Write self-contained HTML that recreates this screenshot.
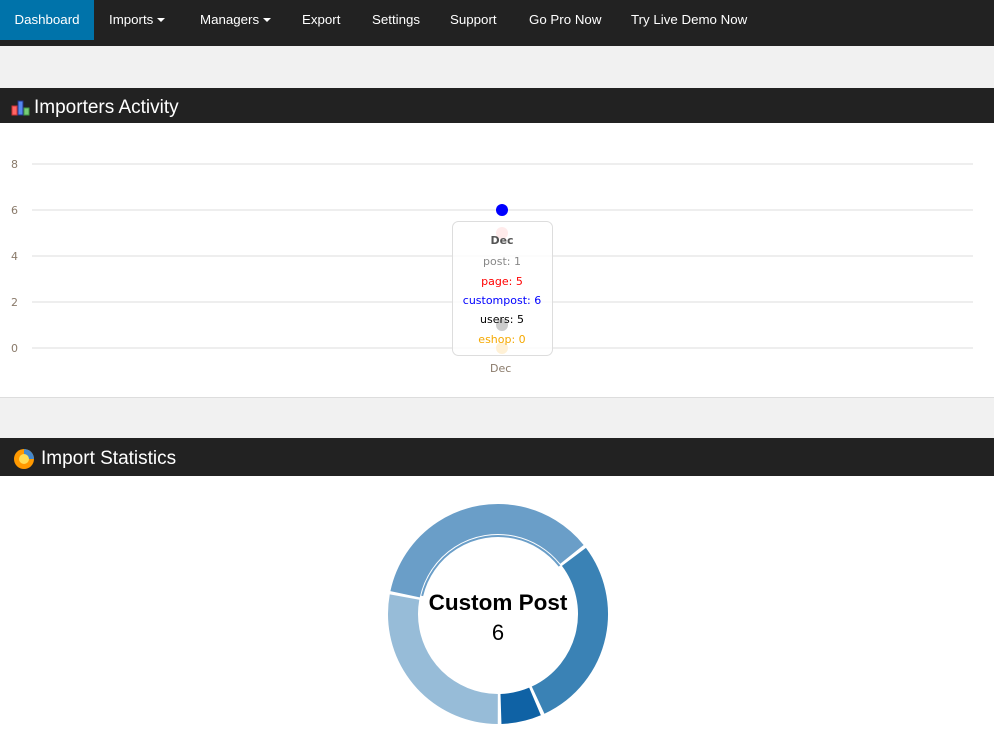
<!DOCTYPE html><html><head><style>
body{margin:0;width:994px;height:745px;overflow:hidden;background:#fff;font-family:"Liberation Sans",sans-serif}
.nav{height:46px;background:#222;position:relative;font-size:13.3px;color:#fff}
.nav div{position:absolute;top:0;line-height:40px;white-space:nowrap}
.nav .a{background:#0073aa;left:0;width:94px;text-align:center;height:40px}
.car{display:inline-block;border-left:4px solid transparent;border-right:4px solid transparent;border-top:4px solid #fff;vertical-align:middle;margin-left:4px}
.gray{background:#f1f1f1}
.hd{background:#222;color:#fff;font-size:19px;display:flex;align-items:center}
</style></head><body>
<div class="nav"><div class="a">Dashboard</div><div style="left:109px">Imports<span class="car"></span></div><div style="left:200px">Managers<span class="car"></span></div><div style="left:302px">Export</div><div style="left:372px">Settings</div><div style="left:450px">Support</div><div style="left:529px">Go Pro Now</div><div style="left:631px">Try Live Demo Now</div></div>
<div class="gray" style="height:42px"></div>
<div class="hd" style="height:35px;padding-top:4px;box-sizing:border-box"><svg width="22" height="20" style="margin-left:11px;margin-right:1px"><rect x="1" y="8" width="5" height="9" fill="#f66" stroke="#c33"/><rect x="7" y="3" width="5" height="14" fill="#58e" stroke="#238"/><rect x="13" y="10" width="5" height="7" fill="#7c7" stroke="#494"/></svg>Importers Activity</div>
<svg width="994" height="274" style="display:block">
<g stroke="#ddd"><line x1="32" x2="973" y1="41" y2="41"/><line x1="32" x2="973" y1="87" y2="87"/><line x1="32" x2="973" y1="133" y2="133"/><line x1="32" x2="973" y1="179" y2="179"/><line x1="32" x2="973" y1="225" y2="225"/></g>
<g font-size="11" fill="#8a7a6a" font-family="DejaVu Sans"><text x="11" y="45">8</text><text x="11" y="91">6</text><text x="11" y="137">4</text><text x="11" y="183">2</text><text x="11" y="229">0</text><text x="490" y="249">Dec</text></g>
<circle cx="502" cy="87" r="6" fill="#00f"/><circle cx="502" cy="110" r="6" fill="#f99"/><circle cx="502" cy="202" r="6" fill="#000"/><circle cx="502" cy="225" r="6" fill="#fb3"/>
<rect x="452.5" y="98.5" width="100" height="134" rx="6" fill="rgba(255,255,255,.8)" stroke="#ddd"/>
<g font-size="11" text-anchor="middle" font-family="DejaVu Sans"><text x="502" y="121" font-weight="bold" fill="#555">Dec</text><text x="502" y="142" fill="#888">post: 1</text><text x="502" y="162" fill="#f00">page: 5</text><text x="502" y="181" fill="#00f">custompost: 6</text><text x="502" y="200" fill="#000">users: 5</text><text x="502" y="220" fill="#f5a800">eshop: 0</text></g>
</svg>
<div class="gray" style="height:40px;border-top:1px solid #ddd"></div>
<div class="hd" style="height:38px;padding-top:4px;box-sizing:border-box"><svg width="24" height="24" style="margin-left:12px;margin-right:5px"><circle cx="12" cy="12" r="10" fill="#f90"/><path d="M12 12 L12 2 A10 10 0 0 1 22 12Z" fill="#48c"/><circle cx="12" cy="12" r="5" fill="#fd5"/></svg>Import Statistics</div>
<svg width="994" height="269" style="display:block;position:absolute;top:476px;left:0">
<g transform="rotate(192 498 138)" fill="none" stroke-width="30">
<circle cx="498" cy="138" r="95" stroke="#6a9ec8" stroke-dasharray="214 600"/>
<circle cx="498" cy="138" r="95" stroke="#3a82b5" stroke-dasharray="169 600" stroke-dashoffset="-217.2"/>
<circle cx="498" cy="138" r="95" stroke="#0f62a5" stroke-dasharray="35 600" stroke-dashoffset="-389.6"/>
<circle cx="498" cy="138" r="95" stroke="#97bcd8" stroke-dasharray="166 600" stroke-dashoffset="-427.8"/>
<circle cx="498" cy="138" r="78" stroke="#6a9ec8" stroke-width="2" stroke-dasharray="175 600" stroke-dashoffset="-2"/>
</g>
<text x="498" y="134" text-anchor="middle" font-size="22.5" font-weight="bold" font-family="Liberation Sans">Custom Post</text>
<text x="498" y="164" text-anchor="middle" font-size="22" font-family="Liberation Sans">6</text>
</svg>
</body></html>
